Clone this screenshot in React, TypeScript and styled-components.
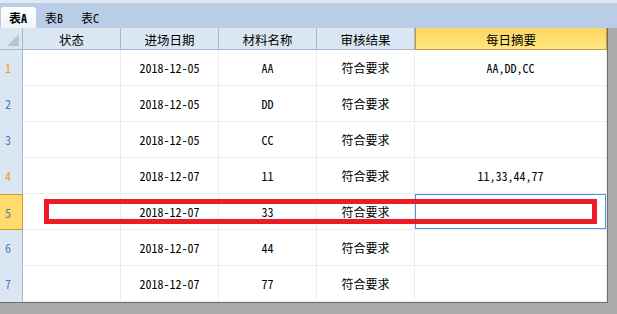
import React from "react";
import styled, { createGlobalStyle } from "styled-components";

const GlobalStyle = createGlobalStyle`
	html, body {
		margin: 0;
		padding: 0;
		background: #ababab;
	}
	body {
		font-family: "Noto Sans Mono CJK SC", "Noto Sans CJK SC", "Liberation Mono", monospace;
		font-size: 12px;
		color: #000;
	}
`;

const Page = styled.div`
	width: 617px;
	height: 314px;
	overflow: hidden;
	background: #ababab;
`;

const TabBar = styled.div`
	height: 25px;
	border-top: 3px solid #dfe8f3;
	background: #bacde6;
	display: flex;
	align-items: flex-end;
	padding-left: 1px;
`;

interface TabProps {
	active?: boolean;
}

const Tab = styled.div<TabProps>`
	height: 21px;
	width: 35px;
	box-sizing: border-box;
	padding-left: 8px;
	display: flex;
	align-items: center;
	font-weight: ${(props) => (props.active ? 700 : 400)};
	background: ${(props) => (props.active ? "linear-gradient(#ffffff, #eef3fa)" : "transparent")};
	border-radius: 3px 3px 0 0;
	margin-right: 1px;
`;

const GridWrap = styled.div`
	position: relative;
	width: 607px;
	border-right: 1px solid #6e6e6e;
	border-bottom: 1px solid #6e6e6e;
	background: #fff;
`;

const Grid = styled.div`
	display: grid;
	grid-template-columns: 23px repeat(4, 98px) 192px;
	grid-template-rows: 22px repeat(7, 36px);
`;

interface HeadProps {
	hot?: boolean;
}

const HeadCell = styled.div<HeadProps>`
	box-sizing: border-box;
	display: flex;
	align-items: center;
	justify-content: center;
	padding-top: 1px;
	background: ${(props) => (props.hot ? "linear-gradient(#fdd562, #ffe67e)" : "#dbe6f3")};
	border-right: 1px solid ${(props) => (props.hot ? "#c89b38" : "#a3b7cf")};
	border-bottom: 1px solid ${(props) => (props.hot ? "#c89b38" : "#a3b7cf")};
	border-left: ${(props) => (props.hot ? "1px solid #c89b38" : "none")};
	font-size: 12.5px;
`;

const Corner = styled(HeadCell)`
	position: relative;
	&::after {
		content: "";
		position: absolute;
		right: 3px;
		bottom: 3px;
		width: 0;
		height: 0;
		border-left: 12px solid transparent;
		border-bottom: 12px solid #b6c4d6;
	}
`;

interface RowHeadProps {
	current?: boolean;
	marked?: boolean;
}

const RowHead = styled.div<RowHeadProps>`
	box-sizing: border-box;
	display: flex;
	align-items: center;
	padding-left: 5px;
	background: ${(props) => (props.current ? "#fedb6b" : "#dbe6f3")};
	border-right: 1px solid ${(props) => (props.current ? "#c89b38" : "#a3b7cf")};
	border-bottom: 1px solid ${(props) => (props.current ? "#c89b38" : "#dbe6f3")};
	border-top: ${(props) => (props.current ? "1px solid #c89b38" : "none")};
	color: ${(props) => (props.marked ? "#f0a020" : "#4a7db8")};
`;

interface CellProps {
	selected?: boolean;
}

const Cell = styled.div<CellProps>`
	box-sizing: border-box;
	display: flex;
	align-items: center;
	justify-content: center;
	border-right: 1px solid #ececec;
	border-bottom: 1px solid #ececec;
	box-shadow: ${(props) => (props.selected ? "inset 0 0 0 1px #3f98e8" : "none")};
	white-space: pre;
`;

const Mark = styled.div`
	position: absolute;
	left: 44px;
	top: 171px;
	width: 553px;
	height: 25px;
	box-sizing: border-box;
	border: 5px solid #ed1c24;
	pointer-events: none;
`;

interface Row {
	date: string;
	name: string;
	result: string;
	summary: string;
}

const rows: Row[] = [
	{ date: "2018-12-05", name: "AA", result: "符合要求", summary: "AA,DD,CC" },
	{ date: "2018-12-05", name: "DD", result: "符合要求", summary: "" },
	{ date: "2018-12-05", name: "CC", result: "符合要求", summary: "" },
	{ date: "2018-12-07", name: "11", result: "符合要求", summary: "11,33,44,77" },
	{ date: "2018-12-07", name: "33", result: "符合要求", summary: "" },
	{ date: "2018-12-07", name: "44", result: "符合要求", summary: "" },
	{ date: "2018-12-07", name: "77", result: "符合要求", summary: "" },
];

const headers = ["状态", "进场日期", "材料名称", "审核结果"];

const App = () => {
	const currentRow = 4;

	return (
		<Page>
			<GlobalStyle />
			<TabBar>
				<Tab active>表A</Tab>
				<Tab>表B</Tab>
				<Tab>表C</Tab>
			</TabBar>
			<GridWrap>
				<Grid>
					<Corner />
					{headers.map((h) => (
						<HeadCell key={h}>{h}</HeadCell>
					))}
					<HeadCell hot>每日摘要</HeadCell>
					{rows.map((row, i) => (
						<React.Fragment key={i}>
							<RowHead current={i === currentRow} marked={row.summary !== ""}>
								{i + 1}
							</RowHead>
							<Cell />
							<Cell>{row.date}</Cell>
							<Cell>{row.name}</Cell>
							<Cell>{row.result}</Cell>
							<Cell selected={i === currentRow}>{row.summary}</Cell>
						</React.Fragment>
					))}
				</Grid>
				<Mark />
			</GridWrap>
		</Page>
	);
};

export default App;
